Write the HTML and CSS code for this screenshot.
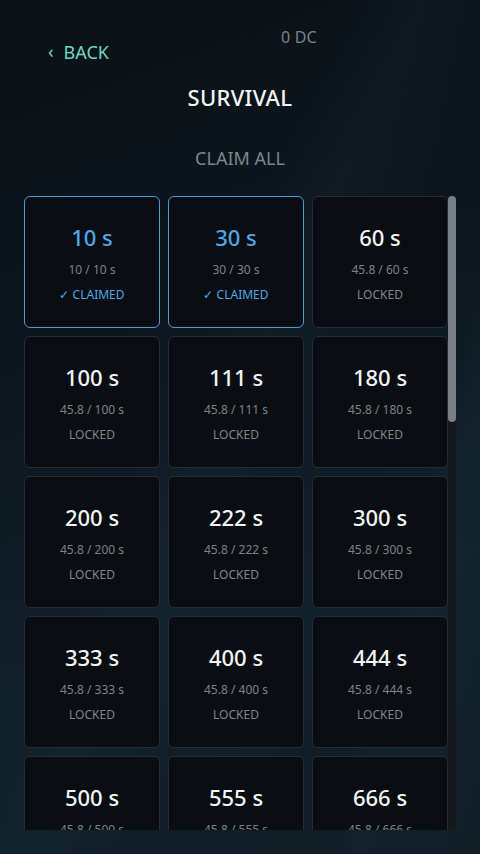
FILE: index.html
```html
<!DOCTYPE html>
<html lang="en">
<head>
<meta charset="utf-8">
<title>Survival</title>
<link rel="stylesheet" href="styles.css">
</head>
<body>
<div class="screen">
  <header class="top">
    <div class="balance">0 DC</div>
    <button class="back"><span class="chev">‹</span>BACK</button>
    <h1 class="title">SURVIVAL</h1>
    <button class="claim-all">CLAIM ALL</button>
  </header>
  <div class="list">
    <div class="viewport">
      <div class="grid">
        <div class="card claimed"><div class="val">10 s</div><div class="prog">10 / 10 s</div><div class="status">✓ CLAIMED</div></div>
        <div class="card claimed"><div class="val">30 s</div><div class="prog">30 / 30 s</div><div class="status">✓ CLAIMED</div></div>
        <div class="card"><div class="val">60 s</div><div class="prog">45.8 / 60 s</div><div class="status">LOCKED</div></div>
        <div class="card"><div class="val">100 s</div><div class="prog">45.8 / 100 s</div><div class="status">LOCKED</div></div>
        <div class="card"><div class="val">111 s</div><div class="prog">45.8 / 111 s</div><div class="status">LOCKED</div></div>
        <div class="card"><div class="val">180 s</div><div class="prog">45.8 / 180 s</div><div class="status">LOCKED</div></div>
        <div class="card"><div class="val">200 s</div><div class="prog">45.8 / 200 s</div><div class="status">LOCKED</div></div>
        <div class="card"><div class="val">222 s</div><div class="prog">45.8 / 222 s</div><div class="status">LOCKED</div></div>
        <div class="card"><div class="val">300 s</div><div class="prog">45.8 / 300 s</div><div class="status">LOCKED</div></div>
        <div class="card"><div class="val">333 s</div><div class="prog">45.8 / 333 s</div><div class="status">LOCKED</div></div>
        <div class="card"><div class="val">400 s</div><div class="prog">45.8 / 400 s</div><div class="status">LOCKED</div></div>
        <div class="card"><div class="val">444 s</div><div class="prog">45.8 / 444 s</div><div class="status">LOCKED</div></div>
        <div class="card"><div class="val">500 s</div><div class="prog">45.8 / 500 s</div><div class="status">LOCKED</div></div>
        <div class="card"><div class="val">555 s</div><div class="prog">45.8 / 555 s</div><div class="status">LOCKED</div></div>
        <div class="card"><div class="val">666 s</div><div class="prog">45.8 / 666 s</div><div class="status">LOCKED</div></div>
      </div>
    </div>
    <div class="scrollbar"><div class="thumb"></div></div>
  </div>
</div>
</body>
</html>
```

FILE: styles.css
```css
html, body {
  margin: 0;
  padding: 0;
}
body {
  width: 480px;
  height: 854px;
  overflow: hidden;
  font-family: "Noto Sans", "Open Sans", sans-serif;
  background:
    linear-gradient(105deg, rgba(0,0,0,0) 0%, rgba(0,0,0,0) 78%, rgba(40,70,85,0.10) 82%, rgba(40,70,85,0.04) 100%),
    linear-gradient(115deg, rgba(255,255,255,0) 0%, rgba(255,255,255,0) 40%, rgba(70,110,130,0.06) 48%, rgba(255,255,255,0) 60%),
    linear-gradient(160deg, #0a1117 0%, #0d161d 35%, #10202a 70%, #0f1c24 100%);
  color: #e8eef0;
}
.screen {
  display: flex;
  flex-direction: column;
  height: 854px;
}
.top {
  display: flex;
  flex-direction: column;
  align-items: center;
  padding-top: 26px;
}
.balance {
  align-self: flex-start;
  margin-left: 281px;
  font-size: 16px;
  line-height: 22px;
  color: #7b8388;
  letter-spacing: 0.2px;
}
.back {
  align-self: flex-start;
  margin-left: 48px;
  margin-top: -9px;
  background: none;
  border: 0;
  padding: 0;
  font-family: inherit;
  font-size: 18px;
  line-height: 26px;
  color: #72d6c0;
  display: flex;
  align-items: center;
}
.chev {
  font-size: 18px;
  margin-right: 10px;
  position: relative;
  top: -1px;
}
.title {
  margin: 17px 0 0;
  font-size: 22px;
  font-weight: 500;
  line-height: 30px;
  color: #f2f6f7;
  letter-spacing: 0.3px;
}
.claim-all {
  margin-top: 34px;
  background: none;
  border: 0;
  padding: 0;
  font-family: inherit;
  font-size: 18px;
  line-height: 24px;
  color: #7c858a;
}
.list {
  margin: 26px 0 0 24px;
  width: 432px;
  height: 634px;
  display: flex;
}
.viewport {
  width: 424px;
  height: 634px;
  overflow: hidden;
}
.scrollbar {
  width: 8px;
  height: 634px;
  background: #16191c;
}
.thumb {
  height: 226px;
  border-radius: 4px;
  background: #7a7f83;
}
.grid {
  display: grid;
  grid-template-columns: repeat(3, 136px);
  gap: 8px;
}
.card {
  box-sizing: border-box;
  height: 132px;
  padding-top: 25px;
  border: 1px solid #272d33;
  border-radius: 6px;
  background: #0a0e12;
  display: flex;
  flex-direction: column;
  align-items: center;
}
.val {
  font-size: 22px;
  font-weight: 500;
  line-height: 30px;
  color: #f2f5f6;
}
.prog {
  margin-top: 10px;
  font-size: 12px;
  line-height: 16px;
  color: #7b8288;
}
.status {
  margin-top: 9px;
  font-size: 12px;
  line-height: 16px;
  color: #7d858a;
}
.card.claimed {
  border-color: #4b9bd6;
}
.card.claimed .val {
  color: #4ea6e6;
}
.card.claimed .status {
  color: #4ea6e6;
}
```
